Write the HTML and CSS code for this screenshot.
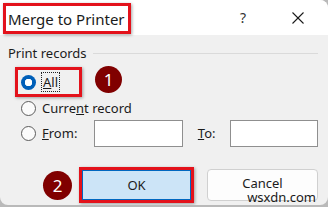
FILE: index.html
```html
<!DOCTYPE html>
<html lang="en">
<head>
    <meta charset="UTF-8">
    <meta name="viewport" content="width=device-width, initial-scale=1.0">
    <title>Merge to Printer</title>
    <link rel="stylesheet" href="styles.css">
</head>
<body>
    <div class="dialog">
        <div class="titlebar">
            <div class="title mark">Merge to Printer</div>
            <div class="title-buttons">
                <span class="help">?</span>
                <span class="close">
                    <svg width="12" height="12" viewBox="0 0 12 12" stroke="#1a1a1a" stroke-width="1.1">
                        <line x1="0.5" y1="0.5" x2="11.5" y2="11.5"></line>
                        <line x1="11.5" y1="0.5" x2="0.5" y2="11.5"></line>
                    </svg>
                </span>
            </div>
        </div>

        <div class="content">
            <div class="group-title">
                <span>Print records</span>
                <div class="group-line"></div>
            </div>

            <div class="row first-row">
                <div class="option mark">
                    <span class="radio checked"></span>
                    <span class="label focused"><u>A</u>ll</span>
                </div>
                <span class="badge">1</span>
            </div>

            <div class="row">
                <div class="option">
                    <span class="radio"></span>
                    <span class="label">Curre<u>n</u>t record</span>
                </div>
            </div>

            <div class="row from-row">
                <div class="option">
                    <span class="radio"></span>
                    <span class="label"><u>F</u>rom:</span>
                </div>
                <div class="field from-field"></div>
                <span class="label to-label"><u>T</u>o:</span>
                <div class="field"></div>
            </div>

            <div class="button-row">
                <span class="badge big">2</span>
                <div class="mark ok-wrap">
                    <button class="btn ok">OK</button>
                </div>
                <button class="btn cancel">Cancel</button>
            </div>
        </div>

        <div class="watermark">wsxdn.com</div>
    </div>
</body>
</html>
```

FILE: styles.css
```css
body {
    margin: 0;
    padding: 0;
    width: 328px;
    height: 207px;
    overflow: hidden;
    background-color: #b9b9b9;
    font-family: "Noto Sans", "Open Sans", sans-serif;
    color: #1b1b1b;
}

.dialog {
    position: relative;
    width: 328px;
    height: 205px;
    background-color: #f0f0f0;
    border-radius: 0 8px 8px 8px;
    overflow: hidden;
}

.titlebar {
    display: flex;
    align-items: center;
    justify-content: space-between;
    height: 35px;
    padding-left: 3px;
    background-color: #fff;
    box-sizing: border-box;
}

.mark {
    border: 3px solid #e3121b;
    box-shadow: 1px 1px 3px rgba(0, 0, 0, 0.35);
}

.title {
    height: 31px;
    box-sizing: border-box;
    width: 128px;
    padding-left: 2px;
    display: flex;
    align-items: center;
    font-size: 15px;
    margin-top: 2px;
}

.title-buttons {
    display: flex;
    align-items: center;
    height: 100%;
}

.help {
    font-size: 14px;
    margin-right: 46px;
    color: #333;
}

.close {
    display: flex;
    margin-right: 24px;
}

.content {
    padding: 0 10px 0 8px;
}

.group-title {
    display: flex;
    align-items: center;
    height: 28px;
    margin-top: 4px;
    font-size: 13px;
}

.group-line {
    flex: 1;
    height: 1px;
    margin-left: 6px;
    background-color: #dadada;
}

.row {
    display: flex;
    align-items: center;
    height: 22px;
    font-size: 13px;
}

.first-row {
    height: 30px;
    margin-left: 7px;
}

.option {
    display: flex;
    align-items: center;
    height: 30px;
    box-sizing: border-box;
    width: 67px;
    padding-left: 3px;
}

.row .option:not(.mark) {
    padding-left: 13px;
    width: auto;
}

.radio {
    width: 13px;
    height: 13px;
    border: 1px solid #5c5c5c;
    border-radius: 50%;
    background-color: #fbfbfb;
    margin-right: 6px;
    flex-shrink: 0;
}

.radio.checked {
    width: 15px;
    height: 15px;
    border: none;
    background: radial-gradient(circle, #fff 0 3.5px, #005fb8 4px);
}

.label {
    white-space: nowrap;
}

.focused {
    outline: 1px dotted #222;
    padding: 0 1px;
}

.badge {
    width: 27px;
    height: 27px;
    border-radius: 50%;
    background-color: #800000;
    color: #fff;
    display: flex;
    align-items: center;
    justify-content: center;
    font-size: 17px;
    margin-left: 13px;
    margin-top: -5px;
}

.from-row {
    height: 28px;
}

.field {
    width: 88px;
    height: 25px;
    background-color: #fff;
    border: 1px solid #8f8f8f;
}

.from-field {
    margin-left: 17px;
}

.to-label {
    margin-left: 15px;
    margin-right: 14px;
}

.button-row {
    display: flex;
    align-items: center;
    margin-top: 20px;
}

.badge.big {
    width: 29px;
    height: 29px;
    margin-left: 35px;
    margin-top: 0;
    margin-right: 7px;
}

.ok-wrap {
    display: flex;
}

.btn {
    font-family: "Noto Sans", "Open Sans", sans-serif;
    font-size: 13px;
    color: #1b1b1b;
    border-radius: 4px;
}

.ok {
    width: 109px;
    height: 30px;
    background-color: #cce4f7;
    border: 1px solid #0067c0;
    border-radius: 0;
}

.cancel {
    width: 111px;
    height: 32px;
    margin-left: 13px;
    padding-bottom: 5px;
    line-height: 14px;
    background-color: #fdfdfd;
    border: 1px solid #d0d0d0;
}

.watermark {
    position: absolute;
    right: 12px;
    bottom: 0;
    font-size: 13px;
    line-height: 16px;
    color: #1a1a1a;
}
```
